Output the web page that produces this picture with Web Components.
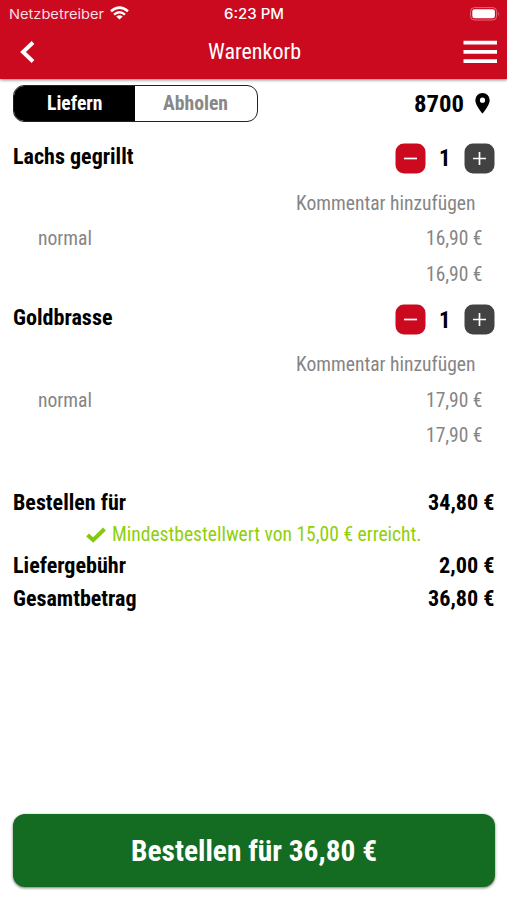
<!DOCTYPE html>
<html lang="de">
<head>
<meta charset="utf-8">
<title>Warenkorb</title>
<style>
html,body{margin:0;height:100%;background:#fff;overflow:hidden}
body{font-family:"Roboto Condensed",Roboto,"Liberation Sans",sans-serif;font-stretch:75%}
</style>
</head>
<body>
<cart-screen></cart-screen>
<script>
const define = (name, html, setup) => customElements.define(name, class extends HTMLElement {
  connectedCallback() {
    if (this.shadowRoot) return;
    const a = n => this.getAttribute(n) || '';
    this.attachShadow({mode: 'open'}).innerHTML = typeof html === 'function' ? html(a) : html;
    if (setup) setup(this, this.shadowRoot);
  }
});

/* One line of text condensed horizontally to the width given by "w". */
define('fit-text', a => `<style>
:host{display:block;flex:none;width:${a('w')}px;font-size:${a('size')}px;line-height:1.2;white-space:nowrap}
span{display:inline-block;transform-origin:0 50%}
</style><span><slot></slot></span>`, (host, root) => {
  const s = root.querySelector('span');
  const natural = s.getBoundingClientRect().width;
  if (natural) s.style.transform = `scaleX(${host.getAttribute('w') / natural})`;
});

define('status-bar', `<style>
:host{display:grid;grid-template-columns:1fr auto 1fr;align-items:center;height:27px;padding:0 7px 0 9px;box-sizing:border-box;color:#fbdfe2;font-family:Inter,"Liberation Sans",sans-serif;font-stretch:100%}
div{display:flex;align-items:center;gap:6px}
.r{justify-content:flex-end}
.t{font-weight:500;color:#fff;padding:1px 1px 0 0}
.l{padding-top:1px}
svg{display:block}
.l svg{margin-top:-2px}
</style>
<div class="l"><fit-text w="95" size="13.5">Netzbetreiber</fit-text>
<svg width="19" height="14" viewBox="0 0 19 14" fill="none" stroke="#fff" stroke-width="2.5"><path d="M1 5.3Q9.5-2.1 18 5.3M4 8.6Q9.5 4 15 8.6"/><path d="M9.5 13.4 6.3 10.5Q9.5 8.1 12.7 10.5Z" fill="#fff" stroke="none"/></svg></div>
<div class="t"><fit-text w="60" size="14.2">6:23 PM</fit-text></div>
<div class="r"><svg width="30" height="14" viewBox="0 0 30 14"><rect x=".6" y=".6" width="26" height="12.4" rx="3.8" fill="none" stroke="#e56a78" stroke-width="1"/><rect x="2.3" y="2.3" width="22.6" height="9" rx="2.2" fill="#fff"/><path d="M28 4.5q1.7 2.2 0 4.5z" fill="#e56a78"/></svg></div>`);

define('nav-bar', `<style>
:host{display:grid;grid-template-columns:1fr auto 1fr;align-items:center;height:52px;padding:0 10px 2px 20px;box-sizing:border-box;color:#fff}
svg{display:block}.m{justify-self:end}
fit-text{padding-right:9px}
</style>
<svg width="15" height="22" viewBox="0 0 15 22" fill="none" stroke="#fff" stroke-width="3.9"><path d="M13 1.5 3 11 13 20.5"/></svg>
<fit-text w="93" size="21.5"><slot></slot></fit-text>
<svg class="m" width="34" height="24" viewBox="0 0 34 24" fill="#fff"><path d="M.5 .8H34V4.6H.5zM.5 10H34V13.8H.5zM.5 19.2H34V23H.5z"/></svg>`);

define('app-header', `<style>
:host{display:block;height:79px;background:#cb0a20;box-shadow:0 1px 3px rgba(0,0,0,.5);flex:none}
</style><status-bar></status-bar><nav-bar><slot></slot></nav-bar>`);

define('mode-switch', `<style>
:host{display:flex;box-sizing:border-box;width:245px;height:37px;border:1.5px solid #222;border-radius:11px;overflow:hidden;font-weight:700}
div{flex:1;display:flex;align-items:center;justify-content:center;color:#888}
.on{background:#000;color:#fff;flex:0 0 121px}
div+div{padding-right:1px}
</style>
<div class="on"><fit-text w="55.5" size="19.5">Liefern</fit-text></div><div><fit-text w="65" size="19.5">Abholen</fit-text></div>`);

define('zip-code', `<style>
:host{display:flex;align-items:center;gap:11px;font-weight:700}
fit-text{margin-top:1px}
svg{display:block;margin-right:4.5px;margin-top:-1px}
</style><fit-text w="50" size="23.5"><slot></slot></fit-text>
<svg width="15" height="21" viewBox="0 0 15 21"><path fill-rule="evenodd" d="M7.5 0A7.2 7.2 0 0 0 .3 7.2C.3 12.4 7.5 20.5 7.5 20.5S14.7 12.4 14.7 7.2A7.2 7.2 0 0 0 7.5 0ZM7.5 4.6A2.6 2.6 0 1 1 7.5 9.8A2.6 2.6 0 0 1 7.5 4.6Z"/></svg>`);

define('amount-stepper', `<style>
:host{display:flex;align-items:center;gap:13px;font-weight:700}
svg{display:block}
</style>
<svg width="31" height="31" viewBox="0 0 31 31"><rect x=".5" y=".5" width="30" height="30" rx="8.5" fill="#cb0a20"/><path d="M9 15.5H22" stroke="#fff" stroke-width="1.7"/></svg>
<fit-text w="11.5" size="23.5"><slot></slot></fit-text>
<svg width="31" height="31" viewBox="0 0 31 31"><rect x=".5" y=".5" width="30" height="30" rx="8.5" fill="#424242"/><path d="M9 15.5H22M15.5 9V22" stroke="#fff" stroke-width="1.7"/></svg>`);

define('cart-item', a => `<style>
:host{display:block;height:161.3px}
.h{display:flex;justify-content:space-between;align-items:center;height:35px;margin-bottom:9.3px}
.n{font-weight:700;padding-bottom:4px}
.row{display:flex;justify-content:space-between;align-items:center;height:35.4px;padding:0 12px 0 24.5px;color:#858585}
.e{justify-content:flex-end}.c{padding-right:19px}
</style>
<div class="h"><fit-text class="n" w="${a('w')}" size="21.5"><slot></slot></fit-text><amount-stepper>1</amount-stepper></div>
<div class="row e c"><fit-text w="179.5" size="20">Kommentar hinzufügen</fit-text></div>
<div class="row"><fit-text w="54" size="20">normal</fit-text><fit-text w="56.5" size="20">${a('price')}</fit-text></div>
<div class="row e"><fit-text w="56.5" size="20">${a('price')}</fit-text></div>`);

define('sum-row', a => `<style>
:host{display:flex;justify-content:space-between;align-items:center;height:32px;font-weight:700}
</style><fit-text w="${a('w')}" size="21.5"><slot></slot></fit-text><fit-text w="${a('pw')}" size="21.5">${a('price')}</fit-text>`);

define('min-order', `<style>
:host{display:flex;justify-content:center;align-items:center;gap:6px;height:31px;color:#8fd00a}
svg{display:block}
fit-text{margin-top:-1px}
</style><svg width="20" height="16" viewBox="0 0 20 16" fill="none" stroke="#86c90c" stroke-width="4"><path d="M1.5 8 7.2 13 18.5 2"/></svg>
<fit-text w="309.5" size="20"><slot></slot></fit-text>`);

define('order-button', `<style>
:host{display:flex;align-items:center;justify-content:center;height:73px;border-radius:12px;background:#136c22;color:#fff;font-weight:700;box-shadow:0 1px 3px rgba(0,0,0,.55)}
fit-text{margin-top:1px}
</style><fit-text w="246" size="29"><slot></slot></fit-text>`);

define('cart-screen', `<style>
:host{display:flex;flex-direction:column;width:507px;height:900px;box-sizing:border-box;background:#fff;color:#000}
main{flex:1;display:flex;flex-direction:column;padding:6px 12.5px 13px 13px}
.top{display:flex;justify-content:space-between;align-items:center;height:37px;margin-bottom:19px}
.sum{margin-top:23.5px}
order-button{margin-top:auto}
</style>
<app-header>Warenkorb</app-header>
<main>
<div class="top"><mode-switch></mode-switch><zip-code>8700</zip-code></div>
<cart-item w="120.5" price="16,90 €">Lachs gegrillt</cart-item>
<cart-item w="99.5" price="17,90 €">Goldbrasse</cart-item>
<div class="sum">
<sum-row w="113" pw="66.5" price="34,80 €">Bestellen für</sum-row>
<min-order>Mindestbestellwert von 15,00 € erreicht.</min-order>
<sum-row w="113" pw="55.5" price="2,00 €">Liefergebühr</sum-row>
<sum-row style="height:33.5px" w="123.5" pw="66.5" price="36,80 €">Gesamtbetrag</sum-row>
</div>
<order-button>Bestellen für 36,80 €</order-button>
</main>`);
</script>
</body>
</html>
